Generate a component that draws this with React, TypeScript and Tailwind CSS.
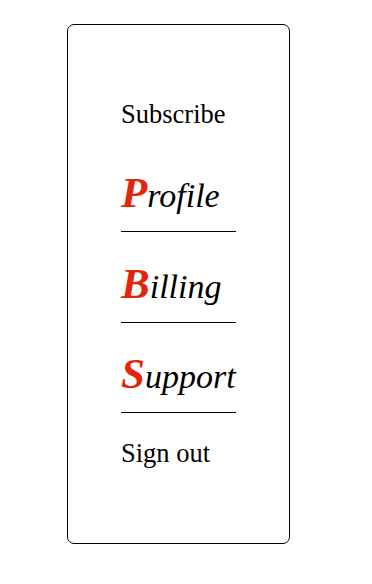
import React from "react";

const items = ["Profile", "Billing", "Support"];

export default function App() {
  return (
    <div className="min-h-[584px] w-[372px] bg-white pt-[24px] pl-[67px]" style={{ fontFamily: '"Liberation Serif", "Times New Roman", serif' }}>
      <div className="box-border flex h-[520px] w-[223px] flex-col rounded-[7px] border border-black pt-[74px] pl-[53px] text-black">
        <div className="text-[26.5px] leading-[30px]">Subscribe</div>
        <div className="mt-[41px] flex flex-col">
          {items.map((t, i) => (
            <div key={t} className={i === 0 ? "" : "mt-[28.5px]"}>
              <div className="text-[34px] italic leading-[52px] whitespace-nowrap">
                <span className="text-[43px] font-bold leading-none text-[#e3260b]">{t[0]}</span>
                {t.slice(1)}
              </div>
              <div className="mt-[9px] h-px w-[115px] bg-black" />
            </div>
          ))}
        </div>
        <div className="mt-[25px] text-[26.5px] leading-[30px]">Sign out</div>
      </div>
    </div>
  );
}
